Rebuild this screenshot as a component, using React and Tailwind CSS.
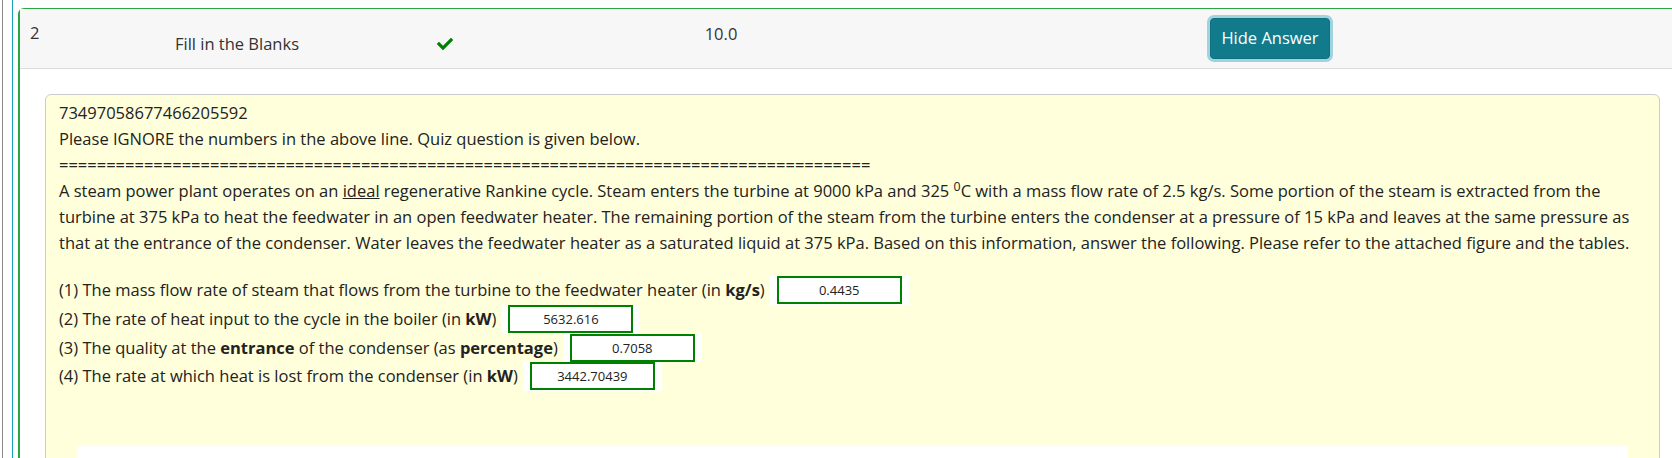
import React from 'react';

const CheckIcon = () => (
    <svg viewBox="0 0 512 512" className="w-[16px] h-[16px]" fill="#008000">
        <path d="M173.898 439.404l-166.4-166.4c-9.997-9.997-9.997-26.206 0-36.204l36.203-36.204c9.997-9.998 26.207-9.998 36.204 0L192 312.69 432.095 72.596c9.997-9.997 26.207-9.997 36.204 0l36.203 36.204c9.997 9.997 9.997 26.206 0 36.204l-294.4 294.401c-9.998 9.997-26.207 9.997-36.204-.001z" />
    </svg>
);

const AnswerBox = ({ value }) => (
    <span className="ml-[5px] h-full bg-white px-[7px] flex items-center">
        <span className="w-[125px] h-[28px] border-2 border-[#008000] bg-white flex items-center justify-center text-[13px] text-[#222]">
            {value}
        </span>
    </span>
);

const questions = [
    { text: <>(1) The mass flow rate of steam that flows from the turbine to the feedwater heater (in <b>kg/s</b>)</>, value: '0.4435' },
    { text: <>(2) The rate of heat input to the cycle in the boiler (in <b>kW</b>)</>, value: '5632.616' },
    { text: <>(3) The quality at the <b>entrance</b> of the condenser (as <b>percentage</b>)</>, value: '0.7058' },
    { text: <>(4) The rate at which heat is lost from the condenser (in <b>kW</b>)</>, value: '3442.70439' },
];

export default function App() {
    return (
        <div className="h-[458px] overflow-hidden bg-white font-['Open_Sans',sans-serif] text-[16.5px] text-[#222]">
            <div className="h-full pl-[2px]">
                <div className="h-full border-l border-[#888] pl-[9px]">
                    <div className="h-full border-l border-[#17a2b8] pl-[5px] pt-[8px]">
                        {/* Question card */}
                        <div className="h-full border-l-2 border-t border-[#28a745] rounded-tl-[6px]">
                            {/* Header row */}
                            <div className="h-[60px] bg-[#f7f7f7] border-b border-[#ddd] flex items-start text-[#333]">
                                <div className="w-[81px] pl-[10px] pt-[10px] leading-[27px]">2</div>
                                <div className="w-[272px] pt-[21px] leading-[27px] text-center">Fill in the Blanks</div>
                                <div className="w-[144px] pt-[27px] flex justify-center"><CheckIcon /></div>
                                <div className="w-[408px] pt-[11px] leading-[27px] text-center">10.0</div>
                                <div className="w-[690px] pt-[9px] flex justify-center">
                                    <button className="h-[41px] px-[10px] rounded-[4px] bg-[#117a8b] border border-[#10707f] text-white ring-[3px] ring-[#9fd4de]">
                                        Hide Answer
                                    </button>
                                </div>
                            </div>

                            {/* Body */}
                            <div className="pl-[25px] pr-[12px] pt-[25px] h-full">
                                <div className="h-full bg-[#ffffdc] border border-[#ccc] rounded-[6px] px-[13px] pt-[5px] leading-[26px]">
                                    <div>73497058677466205592</div>
                                    <div>Please IGNORE the numbers in the above line. Quiz question is given below.</div>
                                    <div>======================================================================================</div>
                                    <p className="whitespace-nowrap">
                                        A steam power plant operates on an <u>ideal</u> regenerative Rankine cycle. Steam enters the turbine at 9000 kPa and 325 <sup>0</sup>C with a mass flow rate of 2.5 kg/s. Some portion of the steam is extracted from the<br />
                                        turbine at 375 kPa to heat the feedwater in an open feedwater heater. The remaining portion of the steam from the turbine enters the condenser at a pressure of 15 kPa and leaves at the same pressure as<br />
                                        that at the entrance of the condenser. Water leaves the feedwater heater as a saturated liquid at 375 kPa. Based on this information, answer the following. Please refer to the attached figure and the tables.
                                    </p>
                                    <div className="mt-[20px]">
                                        {questions.map((q, i) => (
                                            <div key={i} className="h-[28.67px] flex items-center whitespace-nowrap">
                                                <span>{q.text}</span>
                                                <AnswerBox value={q.value} />
                                            </div>
                                        ))}
                                    </div>
                                    <div className="mt-[55px] mx-[18px] h-[40px] bg-white" />
                                </div>
                            </div>
                        </div>
                    </div>
                </div>
            </div>
        </div>
    );
}
